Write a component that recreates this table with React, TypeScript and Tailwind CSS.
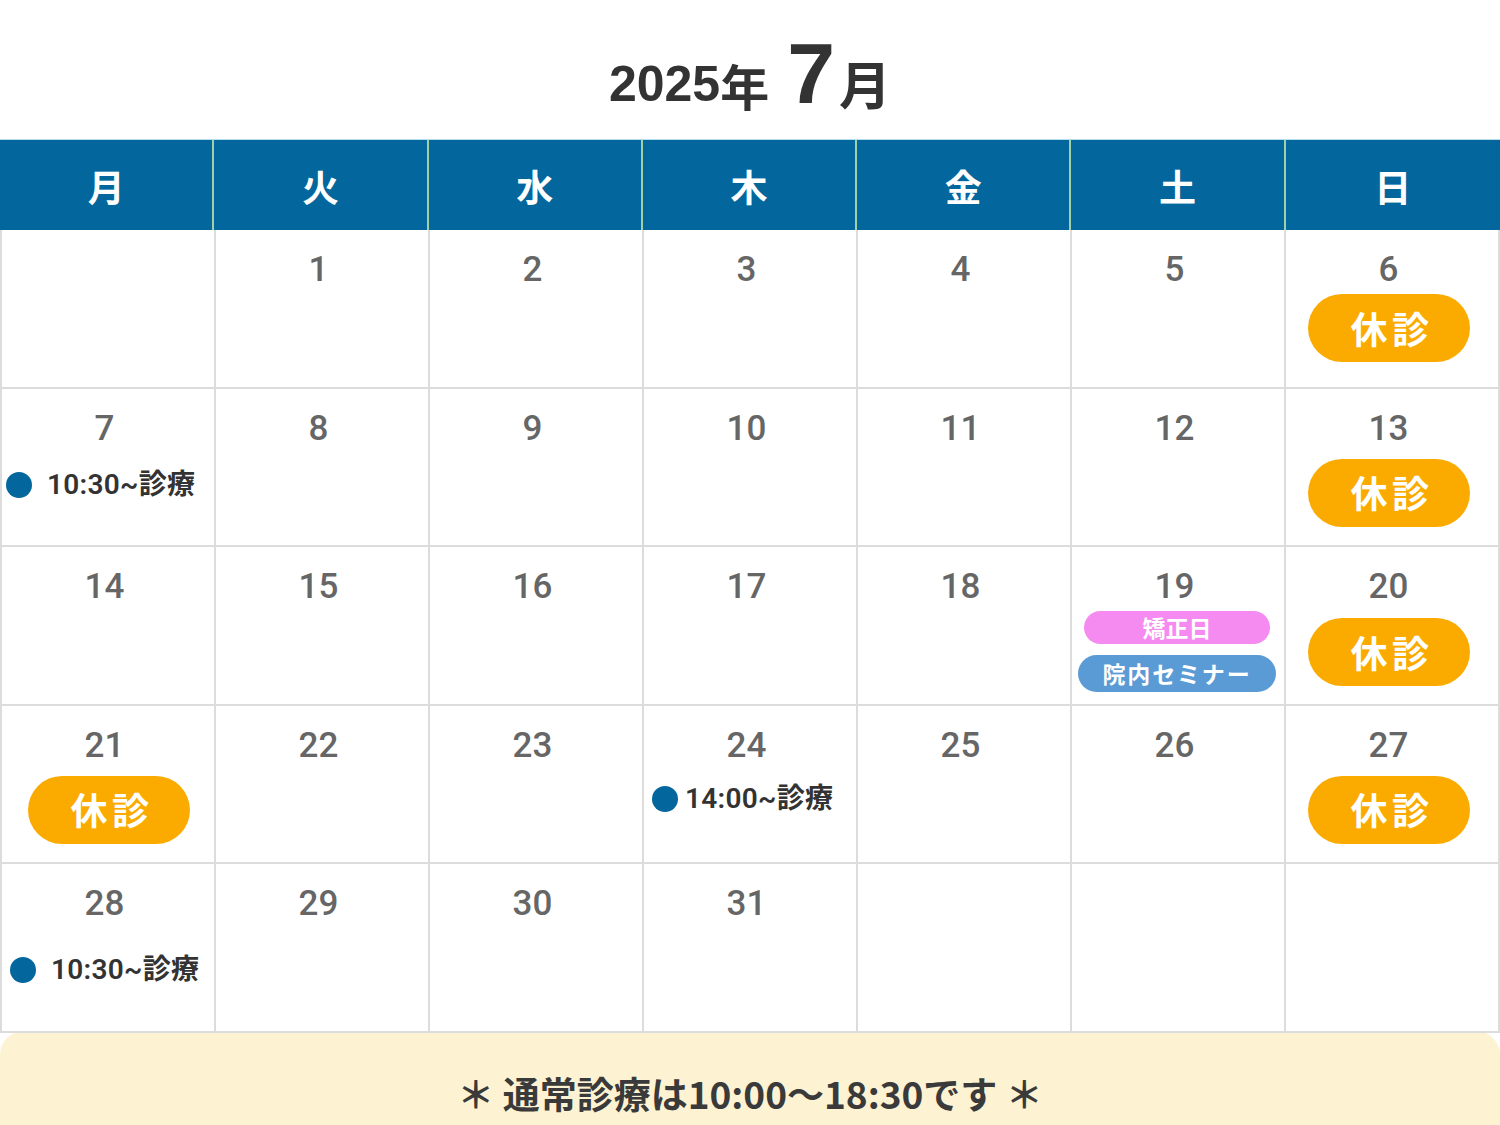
import React from 'react';

type Ev =
  | { kind: 'closed'; mt: string }
  | { kind: 'time'; label: string; cls: string }
  | { kind: 'special' };

type Day = { d?: number; ev?: Ev };

const WEEK = ['月', '火', '水', '木', '金', '土', '日'];

const rows: Day[][] = [
  [{}, { d: 1 }, { d: 2 }, { d: 3 }, { d: 4 }, { d: 5 }, { d: 6, ev: { kind: 'closed', mt: 'mt-[3px]' } }],
  [
    { d: 7, ev: { kind: 'time', label: '10:30~診療', cls: 'mt-[21px] pl-[4px] gap-[15px]' } },
    { d: 8 }, { d: 9 }, { d: 10 }, { d: 11 }, { d: 12 },
    { d: 13, ev: { kind: 'closed', mt: 'mt-[9px]' } },
  ],
  [{ d: 14 }, { d: 15 }, { d: 16 }, { d: 17 }, { d: 18 }, { d: 19, ev: { kind: 'special' } }, { d: 20, ev: { kind: 'closed', mt: 'mt-[10px]' } }],
  [
    { d: 21, ev: { kind: 'closed', mt: 'mt-[9px]' } },
    { d: 22 }, { d: 23 },
    { d: 24, ev: { kind: 'time', label: '14:00~診療', cls: 'mt-[18px] pl-[8px] gap-[7px]' } },
    { d: 25 }, { d: 26 },
    { d: 27, ev: { kind: 'closed', mt: 'mt-[9px]' } },
  ],
  [
    { d: 28, ev: { kind: 'time', label: '10:30~診療', cls: 'mt-[31px] pl-[8px] gap-[15px]' } },
    { d: 29 }, { d: 30 }, { d: 31 }, {}, {}, {},
  ],
];

const jp = "font-['Noto_Sans_CJK_JP','Noto_Sans',sans-serif]";
const num = "font-['Roboto','Noto_Sans_CJK_JP',sans-serif]";

function Closed({ mt }: { mt: string }) {
  return (
    <div className={`${mt} w-[162px] h-[68px] rounded-full bg-[#fbab00] flex items-center justify-center text-white text-[37px] font-semibold tracking-[0.12em] pl-[6px] leading-none`}>
      休診
    </div>
  );
}

function Cell({ day, last, first }: { day: Day; last: boolean; first: boolean }) {
  const ev = day.ev;
  return (
    <div className={`border-r-2 border-b-2 border-[#dcdcdc] ${last ? 'h-[169px]' : 'h-[158.5px]'} flex flex-col`}>
      {day.d !== undefined && (
        <div className={`pt-[19px] pr-[7px] text-center text-[35px] leading-[42px] font-medium text-[#666] ${num}`}>{day.d}</div>
      )}
      {ev?.kind === 'closed' && (
        <div className={`flex justify-center ${first ? 'pl-[2px]' : 'pr-[6px]'}`}>
          <Closed mt={ev.mt} />
        </div>
      )}
      {ev?.kind === 'time' && (
        <div className={`flex items-center ${ev.cls}`}>
          <span className="w-[26px] h-[26px] rounded-full bg-[#03679d] shrink-0" />
          <span className={`text-[28px] font-semibold text-[#333] leading-none tracking-[0.01em] ${num}`}>{ev.label}</span>
        </div>
      )}
      {ev?.kind === 'special' && (
        <div className="flex flex-col items-center pr-[2px]">
          <div className="mt-[3px] w-[186px] h-[33px] rounded-full bg-[#f58af0] text-white text-[23px] font-semibold flex items-center justify-center leading-none">
            矯正日
          </div>
          <div className="mt-[11px] w-[198px] h-[37px] rounded-full bg-[#5b9bd5] text-white text-[23px] font-semibold flex items-center justify-center tracking-[0.08em] leading-none">
            院内セミナー
          </div>
        </div>
      )}
    </div>
  );
}

export default function App() {
  return (
    <div className={`w-[1500px] h-[1125px] overflow-hidden bg-white ${jp}`}>
      {/* title */}
      <div className="h-[139px] flex items-end justify-center pb-[30px] text-[#333] font-bold">
        <span className="text-[50px] leading-none font-['Liberation_Sans',sans-serif]">2025</span>
        <span className="text-[49px] leading-none mr-[18px]">年</span>
        <span className="text-[86px] leading-[72px] font-['Liberation_Sans',sans-serif] mr-[4px]">7</span>
        <span className="text-[52px] leading-none">月</span>
      </div>

      {/* week header */}
      <div className="border-t border-[#b7dcea] grid grid-cols-7 bg-[#03679d] h-[91px]">
        {WEEK.map((w, i) => (
          <div
            key={w}
            className={`flex items-center justify-center pt-[4px] text-white text-[37px] font-semibold ${i < 6 ? 'border-r-2 border-[#9fd0a6]' : ''}`}
          >
            {w}
          </div>
        ))}
      </div>

      {/* days */}
      <div className="grid grid-cols-7 border-l-2 border-[#dcdcdc]">
        {rows.map((r, ri) =>
          r.map((day, ci) => (
            <Cell key={`${ri}-${ci}`} day={day} last={ri === rows.length - 1} first={ci === 0} />
          ))
        )}
      </div>

      {/* note */}
      <div className="-mt-[2px] h-[100px] rounded-t-[24px] bg-[#fdf3d2] flex items-center justify-center pt-[26px] text-[37px] font-bold text-[#3a3a3a]">
        ＊&nbsp;通常診療は10:00〜18:30です&nbsp;＊
      </div>
    </div>
  );
}
